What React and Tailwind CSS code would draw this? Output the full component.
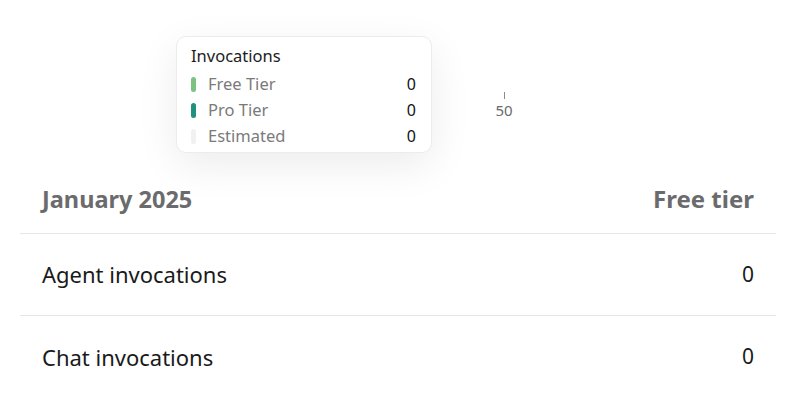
const ROWS = [
  { label: 'Free Tier', value: 0, color: 'bg-[#7cc281]' },
  { label: 'Pro Tier', value: 0, color: 'bg-[#21917f]' },
  { label: 'Estimated', value: 0, color: 'bg-[#f1f1f3]' },
];

const USAGE = [
  { label: 'Agent invocations', value: 0 },
  { label: 'Chat invocations', value: 0 },
];

export default function App() {
  return (
    <div className="w-[800px] h-[412px] bg-white overflow-hidden font-['Noto_Sans',sans-serif]">
      {/* Chart area (mostly cropped) */}
      <div className="relative h-[170px]">
        <div className="absolute left-[492px] top-[92px] flex flex-col items-center w-[24px]">
          <div className="w-px h-[7px] bg-[#8a8a8a]" />
          <span className="text-[15px] leading-[16px] text-[#6a6a6a] mt-[3px]">50</span>
        </div>

        {/* Tooltip */}
        <div className="absolute left-[176px] top-[36px] w-[256px] h-[117px] rounded-[10px] bg-white border border-[#ececec] shadow-[0_12px_40px_rgba(0,0,0,0.08)] px-[14px] pt-[7px]">
          <div className="text-[16.5px] leading-[24px] text-[#1c1c1c]">Invocations</div>
          <div className="mt-[3px] flex flex-col">
            {ROWS.map((r) => (
              <div key={r.label} className="flex items-center h-[26px]">
                <div className={`w-[5px] h-[15px] rounded-full ${r.color}`} />
                <span className="ml-[12px] flex-1 text-[16.5px] text-[#7a7a7a]">{r.label}</span>
                <span className="text-[16px] text-[#111] mr-[1px]">{r.value}</span>
              </div>
            ))}
          </div>
        </div>
      </div>

      {/* Table */}
      <div className="ml-5 w-[756px]">
        <div className="flex items-start justify-between h-[64px] pt-[14px] px-[22px] border-b border-[#e6e6e6]">
          <span className="text-[23.5px] leading-[30px] font-bold text-[#6b6b6d]">January 2025</span>
          <span className="text-[24px] leading-[30px] font-bold text-[#6b6b6d]">Free tier</span>
        </div>
        {USAGE.map((u) => (
          <div key={u.label} className="flex items-center justify-between h-[82px] px-[22px] border-b border-[#e6e6e6] last:border-b-0">
            <span className="text-[22px] text-[#1a1a1a]">{u.label}</span>
            <span className="text-[21px] text-[#1a1a1a]">{u.value}</span>
          </div>
        ))}
      </div>
    </div>
  );
}
